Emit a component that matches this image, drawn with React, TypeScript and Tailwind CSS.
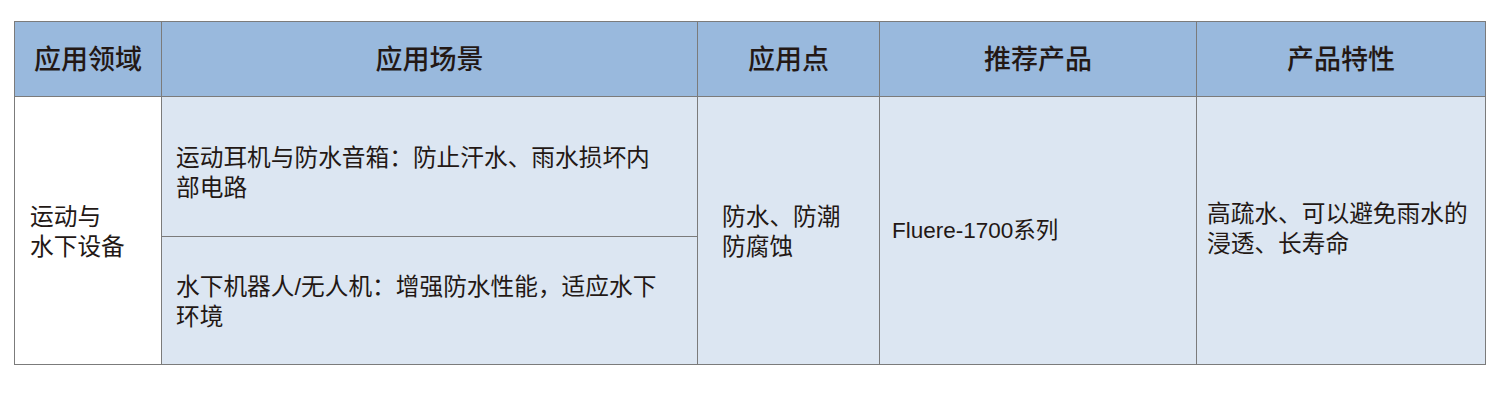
const cjk = { fontFamily: '"Liberation Sans", "Noto Sans CJK SC", sans-serif' };

const headers = ["应用领域", "应用场景", "应用点", "推荐产品", "产品特性"];

export default function App() {
  return (
    <div className="min-h-[405px] bg-white pt-[21px] pl-[14px]" style={cjk}>
      <div className="grid w-fit grid-cols-[146px_535px_181px_316px_288px] grid-rows-[74px_139px_127px] gap-px bg-[#7b7b7b] p-px text-[#231815]">
        {headers.map((h) => (
          <div key={h} className="flex items-center justify-center bg-[#99b9dd] pt-[3px] text-[27px] font-medium">
            {h}
          </div>
        ))}

        <div className="row-span-2 flex items-center bg-white pl-[15px] pt-[2px] text-[23.7px] leading-[30px]">
          运动与<br />水下设备
        </div>

        <div className="flex items-center bg-[#dce6f2] pl-[14px] pt-[12px] text-[23.7px] leading-[30px]">
          <p>
            运动耳机与防水音箱：防止汗水、雨水损坏内<br />部电路
          </p>
        </div>

        <div className="row-span-2 flex items-center bg-[#dce6f2] pl-[24px] pt-[2px] text-[23.7px] leading-[30px]">
          <p>
            防水、防潮<br />防腐蚀
          </p>
        </div>

        <div className="row-span-2 flex items-center bg-[#dce6f2] pl-[12px] text-[22.5px] leading-[30px]">
          Fluere-1700系列
        </div>

        <div className="row-span-2 flex items-center bg-[#dce6f2] pb-[4px] pl-[10px] text-[23.7px] leading-[30px]">
          <p>
            高疏水、可以避免雨水的<br />浸透、长寿命
          </p>
        </div>

        <div className="flex items-center bg-[#dce6f2] pl-[14px] pt-[2px] text-[23.7px] leading-[30px]">
          <p>
            水下机器人/无人机：增强防水性能，适应水下<br />环境
          </p>
        </div>
      </div>
    </div>
  );
}
